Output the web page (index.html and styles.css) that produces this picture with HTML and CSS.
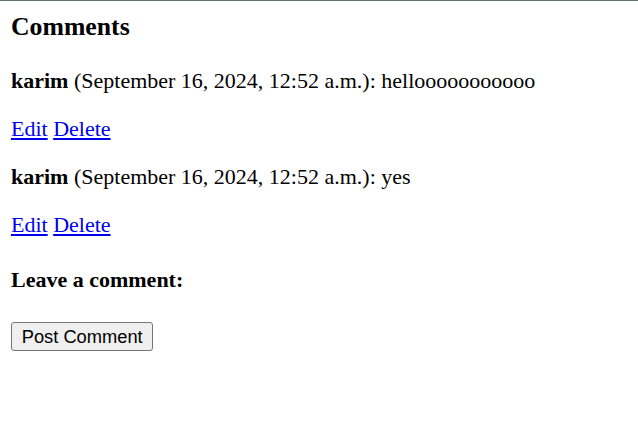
FILE: index.html
```html
<!DOCTYPE html>
<html>
<head>
<meta charset="utf-8">
<title>Comments</title>
<link rel="stylesheet" href="styles.css">
</head>
<body>
<div class="page">
  <h3 class="title">Comments</h3>
  <p class="comment"><strong>karim</strong> (September 16, 2024, 12:52 a.m.): hellooooooooooo</p>
  <p class="actions"><a href="#">Edit</a> <a href="#">Delete</a></p>
  <p class="comment"><strong>karim</strong> (September 16, 2024, 12:52 a.m.): yes</p>
  <p class="actions"><a href="#">Edit</a> <a href="#">Delete</a></p>
  <h4 class="leave">Leave a comment:</h4>
  <form class="form">
    <button type="button" class="btn">Post Comment</button>
  </form>
</div>
</body>
</html>
```

FILE: styles.css
```css
html, body {
  margin: 0;
  padding: 0;
  background: #ffffff;
}
.page {
  border-top: 1px solid #5e6e71;
  padding: 11px;
  font-family: "Liberation Serif", "Times New Roman", serif;
  font-size: 22px;
  color: #000;
}
.title {
  font-size: 25.74px;
  font-weight: bold;
  margin: 0 0 25.74px;
}
.comment, .actions {
  margin: 22px 0;
}
.actions a {
  color: #0000ee;
  text-decoration: underline;
}
.leave {
  font-size: 22px;
  font-weight: bold;
  margin: 29.3px 0;
}
.form {
  margin: 0;
}
.btn {
  font-family: "Liberation Sans", Arial, sans-serif;
  font-size: 18.3px;
  padding: 1px 9.75px;
  height: 29px;
  background: #efefef;
  color: #000;
  border: 1px solid #767676;
  border-radius: 3px;
  margin: 0;
}
```
